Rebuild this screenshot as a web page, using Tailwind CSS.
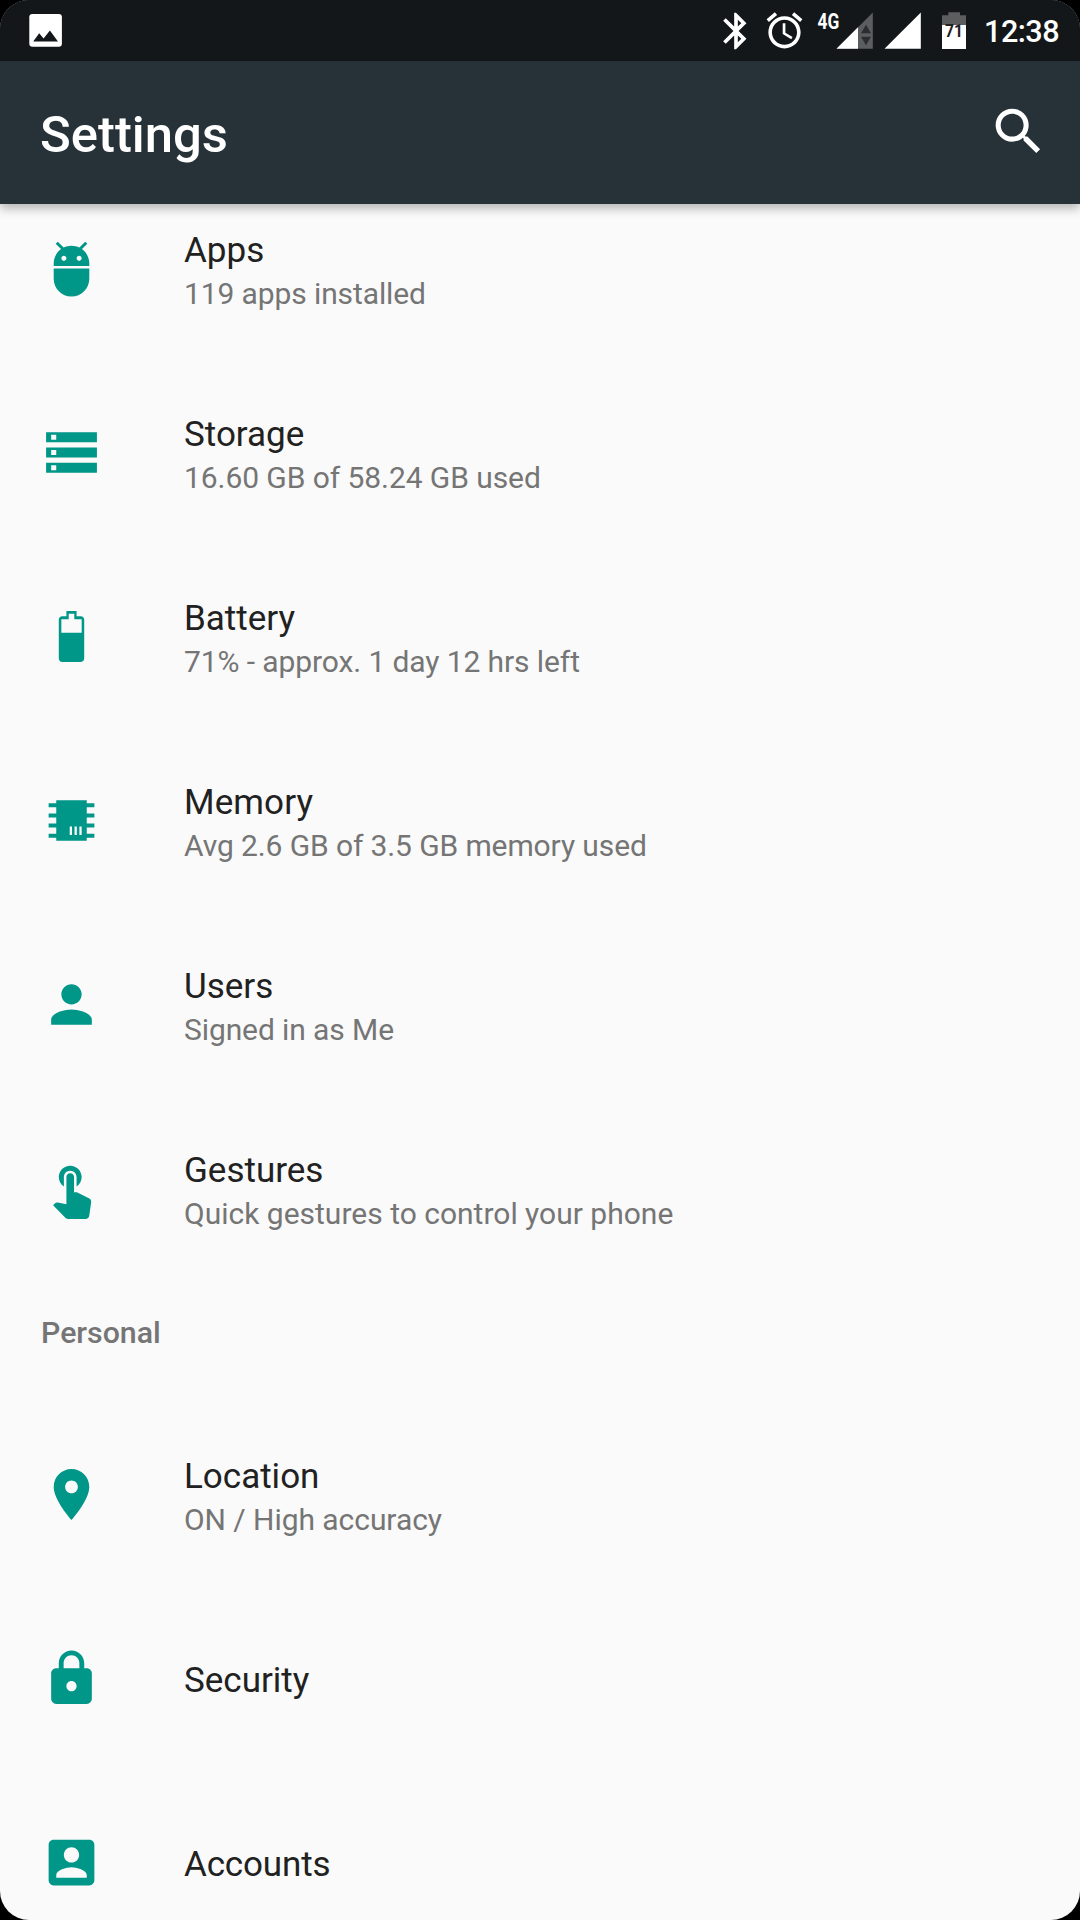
<!DOCTYPE html>
<html lang="en">
<head>
<meta charset="utf-8">
<title>Settings</title>
<script src="https://cdn.jsdelivr.net/npm/@tailwindcss/browser@4"></script>
</head>
<body class="bg-black">
<div class="flex h-[1920px] w-[1080px] flex-col overflow-hidden rounded-[29px] bg-[#fafafa] font-['Roboto',sans-serif]">

  <header class="relative z-10 shrink-0 bg-[#273238] shadow-[0_4px_10px_rgba(0,0,0,0.3)]">
    <!-- status bar -->
    <div class="flex h-[61px] items-start justify-between bg-[#13171a]">
      <svg class="ml-[28px] h-[61px] w-[36px]" viewBox="28 0 36 61">
        <rect x="29.3" y="14" width="32.6" height="32.7" rx="3.2" fill="#fff"/>
        <path d="M33.2 41.4L39.2 33.2l4.4 5.2 6.3-7.8L58 41.4z" fill="#13171a"/>
      </svg>
      <div class="flex pr-[19px]">
        <svg class="mt-[8.600px] mr-[5px] h-[44px] w-[44px]" viewBox="0 0 24 24" fill="#fff"><path d="M17.71 7.71L12 2h-1v7.59L6.41 5 5 6.41 10.59 12 5 17.59 6.41 19 11 14.41V22h1l5.71-5.71-4.3-4.29 4.3-4.29zM13 5.83l1.88 1.88L13 9.59V5.83zm1.88 10.46L13 18.17v-3.76l1.88 1.88z"/></svg>
        <svg class="mt-[9px] mr-[11px] h-[43px] w-[43px]" viewBox="0 0 24 24" fill="#fff"><path d="M22 5.72l-4.6-3.86-1.29 1.53 4.6 3.86L22 5.72zM7.88 3.39L6.6 1.86 2 5.71l1.29 1.53 4.59-3.85zM12.5 8H11v6l4.75 2.85.75-1.23-4-2.37V8zM12 4c-4.97 0-9 4.03-9 9s4.02 9 9 9c4.97 0 9-4.03 9-9s-4.03-9-9-9zm0 16c-3.87 0-7-3.13-7-7s3.13-7 7-7 7 3.13 7 7-3.13 7-7 7z"/></svg>
        <svg class="h-[61px] w-[57px]" viewBox="817 0 57 61">
          <text x="817.6" y="29" font-size="21.5" font-weight="700" fill="#fff" textLength="21.8" lengthAdjust="spacingAndGlyphs">4G</text>
          <path d="M872.8 12.5v36.3H836.5z" fill="#5b5d5f"/>
          <path d="M858 27.3v21.5H836.5z" fill="#fff"/>
          <path d="M861 33.3h10l-5-8.6zM861 36.7h10l-5 8.6z" fill="#2b2e31"/>
        </svg>
        <svg class="ml-[10px] h-[61px] w-[38px]" viewBox="884 0 38 61"><path d="M920.8 12.5v36.3H884.5z" fill="#fff"/></svg>
        <svg class="ml-[19px] h-[61px] w-[26px]" viewBox="941 0 26 61">
          <path d="M942 15.2h6.3v-3H960v3h6V49h-24z" fill="#5b5d5f"/>
          <path d="M942 25h24v24h-24z" fill="#fff"/>
          <text x="945" y="37.4" font-size="18" font-weight="700" fill="#1f2225" textLength="18" lengthAdjust="spacingAndGlyphs">71</text>
        </svg>
        <span class="ml-[17.5px] w-[77px] pt-[11px] text-[30.6px] leading-[41px] font-medium tracking-[-0.5px] text-white">12:38</span>
      </div>
    </div>
    <!-- app bar -->
    <div class="flex h-[143px] items-center justify-between pr-[31px] pl-[40px]">
      <h1 class="pt-[4px] text-[50.800px] leading-[60px] font-medium text-white">Settings</h1>
      <svg class="mb-[3px] h-[61px] w-[61px]" viewBox="0 0 24 24" fill="#fff"><path d="M15.5 14h-.79l-.28-.27A6.471 6.471 0 0 0 16 9.5 6.5 6.5 0 1 0 9.5 16c1.61 0 3.09-.59 4.23-1.57l.27.28v.79l5 4.99L20.49 19l-4.99-5zm-6 0C7.01 14 5 11.99 5 9.5S7.01 5 9.5 5 14 7.01 14 9.5 11.99 14 9.5 14z"/></svg>
    </div>
  </header>

  <main class="-mt-[27px] flex flex-col text-[#212121]">
    <section class="flex h-[184px] shrink-0 items-center pl-[41px]">
      <svg class="mb-[2px] h-[61px] w-[61px] text-[#009688]" viewBox="0 0 24 24" fill="currentColor"><path d="M5 16c0 3.87 3.13 7 7 7s7-3.13 7-7v-4H5v4zM16.12 4.37l2.1-2.1-.82-.83-2.3 2.31C14.16 3.28 13.12 3 12 3s-2.14.28-3.09.75L6.6 1.44l-.82.83 2.1 2.1C6.14 5.64 5 7.68 5 10v1h14v-1c0-2.32-1.14-4.36-2.88-5.63zM9 9c-.55 0-1-.45-1-1s.45-1 1-1 1 .45 1 1-.45 1-1 1zm6 0c-.55 0-1-.45-1-1s.45-1 1-1 1 .45 1 1-.45 1-1 1z"/></svg>
      <div class="ml-[82px] pt-[3px]">
        <h2 class="text-[35px] leading-[46px]">Apps</h2>
        <p class="text-[30px] leading-[40px] tracking-[-0.11px] text-[#757575]">119 apps installed</p>
      </div>
    </section>
    <section class="flex h-[184px] shrink-0 items-center pl-[41px]">
      <svg class="mb-[2px] h-[61px] w-[61px] text-[#009688]" viewBox="0 0 24 24" fill="currentColor"><path d="M2 20h20v-4H2v4zm2-3h2v2H4v-2zM2 4v4h20V4H2zm4 3H4V5h2v2zm-4 7h20v-4H2v4zm2-3h2v2H4v-2z"/></svg>
      <div class="ml-[82px] pt-[3px]">
        <h2 class="text-[35px] leading-[46px]">Storage</h2>
        <p class="text-[30px] leading-[40px] tracking-[-0.07px] text-[#757575]">16.60 GB of 58.24 GB used</p>
      </div>
    </section>
    <section class="flex h-[184px] shrink-0 items-center pl-[41px]">
      <svg class="mb-[2px] h-[61px] w-[61px] text-[#009688]" viewBox="0 0 24 24" fill="currentColor"><path fill-rule="evenodd" d="M15.67 4H14V2h-4v2H8.33C7.6 4 7 4.6 7 5.33v15.33C7 21.4 7.6 22 8.33 22h7.33c.74 0 1.34-.6 1.34-1.33V5.33C17 4.6 16.4 4 15.67 4zM8 10.5V5.2h2.9V3h2.2v2.2H16v5.3z"/></svg>
      <div class="ml-[82px] pt-[3px]">
        <h2 class="text-[35px] leading-[46px]">Battery</h2>
        <p class="text-[30px] leading-[40px] tracking-[-0.1px] text-[#757575]">71% - approx. 1 day 12 hrs left</p>
      </div>
    </section>
    <section class="flex h-[184px] shrink-0 items-center pl-[41px]">
      <svg class="mb-[2px] h-[61px] w-[61px] text-[#009688]" viewBox="0 0 24 24" fill="currentColor"><path fill-rule="evenodd" d="M6 4h12v1.200h3v1.600h-3v2.400h3v1.600h-3v2.400h3v1.600h-3v2.400h3v1.600h-3V20H6v-1.200H3v-1.600h3v-2.400H3v-1.600h3v-2.400H3V9.200h3V6.800H3V5.200h3zM11.300 14.400v3.300h.9v-3.300zM13.200 14.400v3.300h.9v-3.300zM15.100 14.400v3.300h.9v-3.300z"/></svg>
      <div class="ml-[82px] pt-[3px]">
        <h2 class="text-[35px] leading-[46px] tracking-[0.1px]">Memory</h2>
        <p class="text-[30px] leading-[40px] tracking-[-0.11px] text-[#757575]">Avg 2.6 GB of 3.5 GB memory used</p>
      </div>
    </section>
    <section class="flex h-[184px] shrink-0 items-center pl-[41px]">
      <svg class="mb-[2px] h-[61px] w-[61px] text-[#009688]" viewBox="0 0 24 24" fill="currentColor"><path d="M12 12c2.210 0 4-1.790 4-4s-1.790-4-4-4-4 1.790-4 4 1.790 4 4 4zm0 2c-2.670 0-8 1.340-8 4v2h16v-2c0-2.660-5.330-4-8-4z"/></svg>
      <div class="ml-[82px] pt-[3px]">
        <h2 class="text-[35px] leading-[46px]">Users</h2>
        <p class="text-[30px] leading-[40px] tracking-[-0.1px] text-[#757575]">Signed in as Me</p>
      </div>
    </section>
    <section class="flex h-[184px] shrink-0 items-center pl-[41px]">
      <svg class="mb-[2px] h-[61px] w-[61px] text-[#009688]" viewBox="0 0 24 24" fill="currentColor"><path d="M9 11.240V7.500C9 6.120 10.120 5 11.500 5S14 6.120 14 7.500v3.740c1.210-.81 2-2.180 2-3.740C16 5.010 13.990 3 11.500 3S7 5.010 7 7.500c0 1.560.79 2.930 2 3.740zm9.840 4.630l-4.540-2.260c-.17-.07-.35-.11-.54-.11H13v-6c0-.83-.67-1.500-1.500-1.500S10 6.670 10 7.500v10.740l-3.430-.72c-.08-.01-.15-.03-.24-.03-.31 0-.59.13-.79.33l-.79.8 4.940 4.940c.27.27.65.44 1.060.44h6.790c.75 0 1.330-.55 1.440-1.280l.75-5.270c.01-.07.02-.14.02-.2 0-.62-.38-1.160-.91-1.380z"/></svg>
      <div class="ml-[82px] pt-[3px]">
        <h2 class="text-[35px] leading-[46px]">Gestures</h2>
        <p class="text-[30px] leading-[40px] text-[#757575]">Quick gestures to control your phone</p>
      </div>
    </section>

    <h3 class="h-[122px] shrink-0 pt-[31px] pl-[41px] text-[30.300px] leading-[42px] font-medium text-[#757575]">Personal</h3>

    <section class="flex h-[184px] shrink-0 items-center pl-[41px]">
      <svg class="mb-[2px] h-[61px] w-[61px] text-[#009688]" viewBox="0 0 24 24" fill="currentColor"><path d="M12 2C8.130 2 5 5.130 5 9c0 5.250 7 13 7 13s7-7.750 7-13c0-3.870-3.130-7-7-7zm0 9.500c-1.380 0-2.500-1.120-2.500-2.500s1.120-2.500 2.500-2.500 2.500 1.120 2.500 2.500-1.120 2.500-2.500 2.500z"/></svg>
      <div class="ml-[82px] pt-[3px]">
        <h2 class="text-[35px] leading-[46px]">Location</h2>
        <p class="text-[30px] leading-[40px] tracking-[-0.05px] text-[#757575]">ON / High accuracy</p>
      </div>
    </section>
    <section class="flex h-[184px] shrink-0 items-center pl-[41px]">
      <svg class="mb-[2px] h-[61px] w-[61px] text-[#009688]" viewBox="0 0 24 24" fill="currentColor"><path d="M18 8h-1V6c0-2.760-2.240-5-5-5S7 3.240 7 6v2H6c-1.100 0-2 .9-2 2v10c0 1.100.9 2 2 2h12c1.100 0 2-.9 2-2V10c0-1.100-.9-2-2-2zm-6 9c-1.100 0-2-.9-2-2s.9-2 2-2 2 .9 2 2-.9 2-2 2zm3.100-9H8.900V6c0-1.710 1.390-3.100 3.100-3.100 1.710 0 3.100 1.390 3.100 3.100v2z"/></svg>
      <h2 class="ml-[82px] pt-[4px] text-[35px] leading-[46px]">Security</h2>
    </section>
    <section class="flex h-[184px] shrink-0 items-center pl-[41px]">
      <svg class="mb-[2px] h-[61px] w-[61px] text-[#009688]" viewBox="0 0 24 24" fill="currentColor"><path d="M3 5v14c0 1.100.89 2 2 2h14c1.100 0 2-.9 2-2V5c0-1.100-.9-2-2-2H5c-1.110 0-2 .9-2 2zm12 4c0 1.660-1.340 3-3 3s-3-1.340-3-3 1.340-3 3-3 3 1.340 3 3zm-9 8c0-2 4-3.100 6-3.100s6 1.100 6 3.100v1H6v-1z"/></svg>
      <h2 class="ml-[82px] pt-[4px] text-[35px] leading-[46px] tracking-[-0.15px]">Accounts</h2>
    </section>
  </main>
</div>
</body>
</html>
